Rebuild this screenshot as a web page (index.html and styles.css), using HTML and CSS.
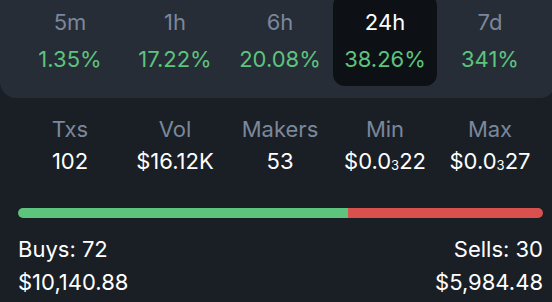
FILE: index.html
```html
<!DOCTYPE html>
<html>
<head>
<meta charset="utf-8">
<link rel="stylesheet" href="styles.css">
</head>
<body>
<div class="panel">
  <div class="grid">
    <div class="tab"><div class="lbl">5m</div><div class="pct">1.35%</div></div>
    <div class="tab"><div class="lbl">1h</div><div class="pct">17.22%</div></div>
    <div class="tab"><div class="lbl">6h</div><div class="pct">20.08%</div></div>
    <div class="tab active"><div class="lbl">24h</div><div class="pct">38.26%</div></div>
    <div class="tab"><div class="lbl">7d</div><div class="pct">341%</div></div>
  </div>
</div>
<div class="grid stats">
  <div class="stat"><div class="lbl">Txs</div><div class="val">102</div></div>
  <div class="stat"><div class="lbl">Vol</div><div class="val">$16.12K</div></div>
  <div class="stat"><div class="lbl">Makers</div><div class="val">53</div></div>
  <div class="stat"><div class="lbl">Min</div><div class="val">$0.0<sub>3</sub>22</div></div>
  <div class="stat"><div class="lbl">Max</div><div class="val">$0.0<sub>3</sub>27</div></div>
</div>
<div class="bar"><div class="buy" style="width:62.9%"></div><div class="sell"></div></div>
<div class="footer">
  <div class="side"><div>Buys: 72</div><div>$10,140.88</div></div>
  <div class="side right"><div>Sells: 30</div><div>$5,984.48</div></div>
</div>
</body>
</html>
```
FILE: styles.css
```css
html, body {
  margin: 0;
  padding: 0;
  background: #1a1f26;
  width: 552px;
  height: 302px;
  overflow: hidden;
  font-family: Inter, "Noto Sans", sans-serif;
  font-size: 22px;
  color: #ffffff;
}
.panel {
  background: #262d36;
  height: 98px;
  width: 556px;
  border-radius: 0 0 16px 16px;
}
.grid {
  display: grid;
  grid-template-columns: repeat(5, 104px);
  column-gap: 1px;
  padding-left: 18px;
}
.tab {
  display: flex;
  flex-direction: column;
  align-items: center;
  margin-top: -6px;
  padding: 13px 0 12px;
  border-radius: 12px;
}
.tab.active {
  background: #0d1115;
}
.lbl {
  color: #7b879b;
  line-height: 30px;
  text-align: center;
}
.tab.active .lbl {
  color: #ffffff;
}
.pct {
  color: #5cc47d;
  line-height: 30px;
  margin-top: 7px;
}
.stats {
  margin-top: 16px;
}
.stat {
  display: flex;
  flex-direction: column;
  align-items: center;
}
.val {
  line-height: 30px;
  margin-top: 2px;
  color: #ffffff;
}
.val sub {
  font-size: 13px;
  vertical-align: baseline;
  position: relative;
  top: 1px;
}
.bar {
  display: flex;
  margin: 29px 9px 0 18px;
  height: 10px;
  border-radius: 5px;
  overflow: hidden;
}
.buy {
  background: #5cc47d;
}
.sell {
  flex: 1;
  background: #d9514f;
}
.footer {
  display: flex;
  justify-content: space-between;
  margin: 15px 9px 0 18px;
  line-height: 33px;
}
.right {
  text-align: right;
}
```
